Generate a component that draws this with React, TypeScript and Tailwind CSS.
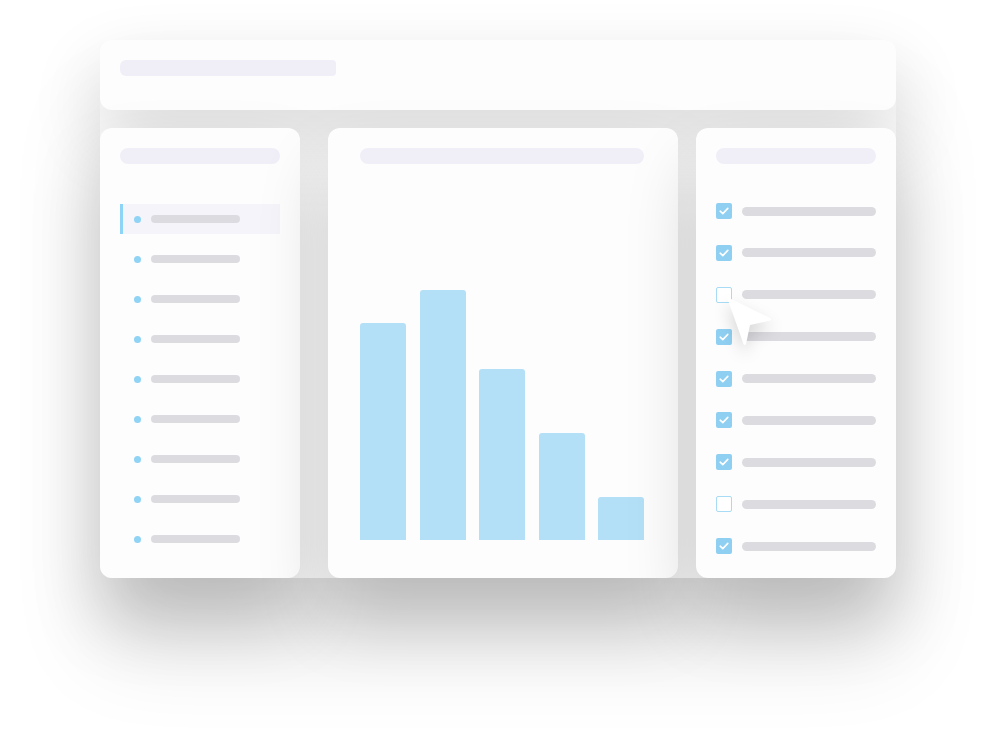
import React from "react";

const listItems = [0, 1, 2, 3, 4, 5, 6, 7, 8];
const bars = [217, 250, 171, 107, 43];
const checks = [true, true, false, true, true, true, true, false, true];

function Check({ on }: { on: boolean }) {
  if (on) {
    return (
      <div className="w-4 h-4 rounded-[2px] bg-[#8fd0f2] flex items-center justify-center shrink-0">
        <svg width="12" height="12" viewBox="0 0 12 12" fill="none">
          <path d="M2.2 6.2 L4.8 8.6 L9.8 3.4" stroke="#ffffff" strokeWidth="1.6" strokeLinecap="round" strokeLinejoin="round" />
        </svg>
      </div>
    );
  }
  return <div className="w-4 h-4 rounded-[2px] border border-[#a8dbf5] bg-white shrink-0" />;
}

export default function App() {
  return (
    <div className="w-full min-h-[738px] bg-white overflow-hidden" style={{ fontFamily: "Inter, sans-serif" }}>
      <div className="w-[796px] ml-[100px] mt-[40px] rounded-xl shadow-[0_70px_90px_rgba(0,0,0,0.12)]">
        <div className="h-[70px] rounded-xl bg-[#fdfdfe] shadow-[0_30px_70px_rgba(0,0,0,0.16)] px-5 pt-5">
          <div className="w-[216px] h-4 bg-[#f0eff8] rounded-l-md rounded-r-sm" />
        </div>
        <div className="flex mt-[18px] h-[450px]">
          <div className="w-[200px] rounded-xl bg-[#fdfdfe] shadow-[0_40px_70px_rgba(0,0,0,0.18)] px-5 pt-5">
            <div className="h-4 rounded-full bg-[#f0eff7]" />
            <div className="mt-10 flex flex-col gap-[10px]">
              {listItems.map((i) => (
                <div
                  key={i}
                  className={
                    i === 0
                      ? "h-[30px] flex items-center border-l-[3px] border-[#8ed4f6] bg-[#f5f4fa] pl-[11px]"
                      : "h-[30px] flex items-center border-l-[3px] border-transparent pl-[11px]"
                  }
                >
                  <div className="w-[7px] h-[7px] rounded-full bg-[#8fd3f5]" />
                  <div className="ml-[10px] w-[89px] h-2 rounded-full bg-[#dcdbe0]" />
                </div>
              ))}
            </div>
          </div>
          <div className="ml-[28px] w-[350px] rounded-xl bg-[#fdfdfe] shadow-[0_40px_70px_rgba(0,0,0,0.18)] pl-8 pr-[34px] pt-5 pb-[38px] flex flex-col">
            <div className="h-4 rounded-full bg-[#f0eff8]" />
            <div className="flex-1 flex items-end justify-between">
              {bars.map((h, i) => (
                <div key={i} className="w-[46px] bg-[#b3e0f7] rounded-t-[3px]" style={{ height: h }} />
              ))}
            </div>
          </div>
          <div className="relative ml-[18px] w-[200px] rounded-xl bg-[#fdfdfe] shadow-[0_40px_70px_rgba(0,0,0,0.18)] px-5 pt-5">
            <div className="h-4 rounded-full bg-[#f0eff7]" />
            <div className="mt-[39px] flex flex-col gap-[25.9px]">
              {checks.map((c, i) => (
                <div key={i} className="h-4 flex items-center">
                  <Check on={c} />
                  <div className="ml-[10px] flex-1 h-[9px] rounded-full bg-[#dcdbe0]" />
                </div>
              ))}
            </div>
            <svg
              className="absolute left-[25px] top-[163px]"
              width="64"
              height="68"
              viewBox="0 0 64 68"
              style={{ filter: "drop-shadow(0 8px 8px rgba(0,0,0,0.16))" }}
            >
              <path d="M6 6 L49 27 Q51 28.5 49 29.5 L29 34 L25 53 Q24 55 22.5 53 Z" fill="#ffffff" />
            </svg>
          </div>
        </div>
      </div>
    </div>
  );
}
